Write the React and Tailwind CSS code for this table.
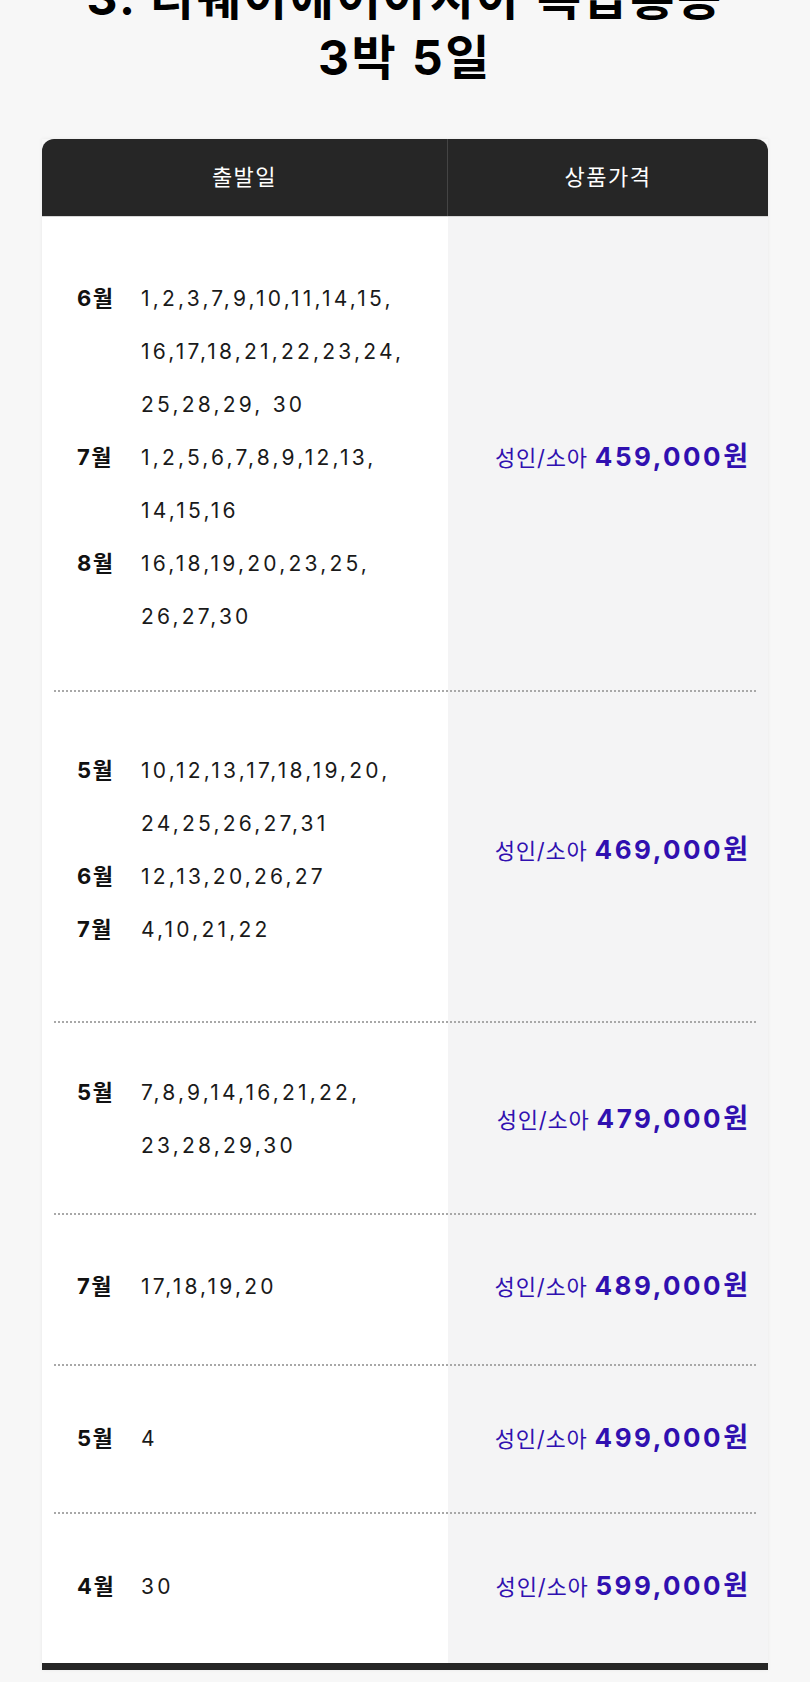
import React from "react";

const rows = [
  {
    groups: [
      { m: "6월", lines: ["1,2,3,7,9,10,11,14,15,", "16,17,18,21,22,23,24,", "25,28,29, 30"] },
      { m: "7월", lines: ["1,2,5,6,7,8,9,12,13,", "14,15,16"] },
      { m: "8월", lines: ["16,18,19,20,23,25,", "26,27,30"] },
    ],
    price: "459,000",
    pad: "pt-[55px] pb-[47px]",
  },
  {
    groups: [
      { m: "5월", lines: ["10,12,13,17,18,19,20,", "24,25,26,27,31"] },
      { m: "6월", lines: ["12,13,20,26,27"] },
      { m: "7월", lines: ["4,10,21,22"] },
    ],
    price: "469,000",
    pad: "pt-[52px] pb-[65px]",
  },
  {
    groups: [{ m: "5월", lines: ["7,8,9,14,16,21,22,", "23,28,29,30"] }],
    price: "479,000",
    pad: "pt-[43px] pb-[41px]",
  },
  {
    groups: [{ m: "7월", lines: ["17,18,19,20"] }],
    price: "489,000",
    pad: "pt-[45px] pb-[51px]",
  },
  {
    groups: [{ m: "5월", lines: ["4"] }],
    price: "499,000",
    pad: "pt-[46px] pb-[47px]",
  },
  {
    groups: [{ m: "4월", lines: ["30"] }],
    price: "599,000",
    pad: "pt-[46px] pb-[50px]",
  },
];

function PriceRow({ row }) {
  return (
    <div className={`mx-3 grid grid-cols-[394px_1fr] items-center ${row.pad}`}>
      <div className="pl-[23px]">
        {row.groups.map((g, i) => (
          <div key={i} className="flex leading-[53px]">
            <span className="w-[64px] shrink-0 text-[22px] font-bold tracking-[1.5px] text-[#111]">{g.m}</span>
            <div className="text-[21px] tracking-[3.2px] text-[#1a1a1a]">
              {g.lines.map((l, j) => (
                <div key={j}>{l}</div>
              ))}
            </div>
          </div>
        ))}
      </div>
      <div className="pr-2 text-right text-[#3010b0] whitespace-nowrap">
        <span className="text-[22px] tracking-[0.8px]">성인/소아 </span>
        <span className="text-[26px] font-bold tracking-[2.5px]">{row.price}</span>
        <span className="text-[27px] font-bold">원</span>
      </div>
    </div>
  );
}

export default function App() {
  return (
    <div
      className="min-h-screen overflow-hidden bg-[#f7f7f7] pb-[14px]"
      style={{ fontFamily: '"Inter", "Noto Sans CJK KR", sans-serif' }}
    >
      {/* title, first line scrolled off the top */}
      <h1 className="mt-[-32px] mb-[51px] text-center text-[48px] font-bold leading-[60px] tracking-[2.5px] text-black">
        3. 티웨이에어아시아 특급홍콩
        <br />
        3박 5일
      </h1>

      <div className="mx-[42px] shadow-[0_0_4px_rgba(0,0,0,0.06)]">
        <div className="grid h-[78px] grid-cols-[406px_1fr] rounded-t-xl border-b border-[#d6d6d6] bg-[#262626] text-[22px] tracking-[1.5px] text-white">
          <div className="flex items-center justify-center border-r border-[#444]">출발일</div>
          <div className="flex items-center justify-center">상품가격</div>
        </div>

        <div className="bg-[linear-gradient(to_right,#ffffff_406px,#f4f4f5_406px)]">
          {rows.map((row, i) => (
            <React.Fragment key={i}>
              {i > 0 && <div className="mx-3 border-t-2 border-dotted border-[#a8a8a8]" />}
              <PriceRow row={row} />
            </React.Fragment>
          ))}
        </div>
        <div className="h-[7px] bg-[#262626]" />
      </div>
    </div>
  );
}
